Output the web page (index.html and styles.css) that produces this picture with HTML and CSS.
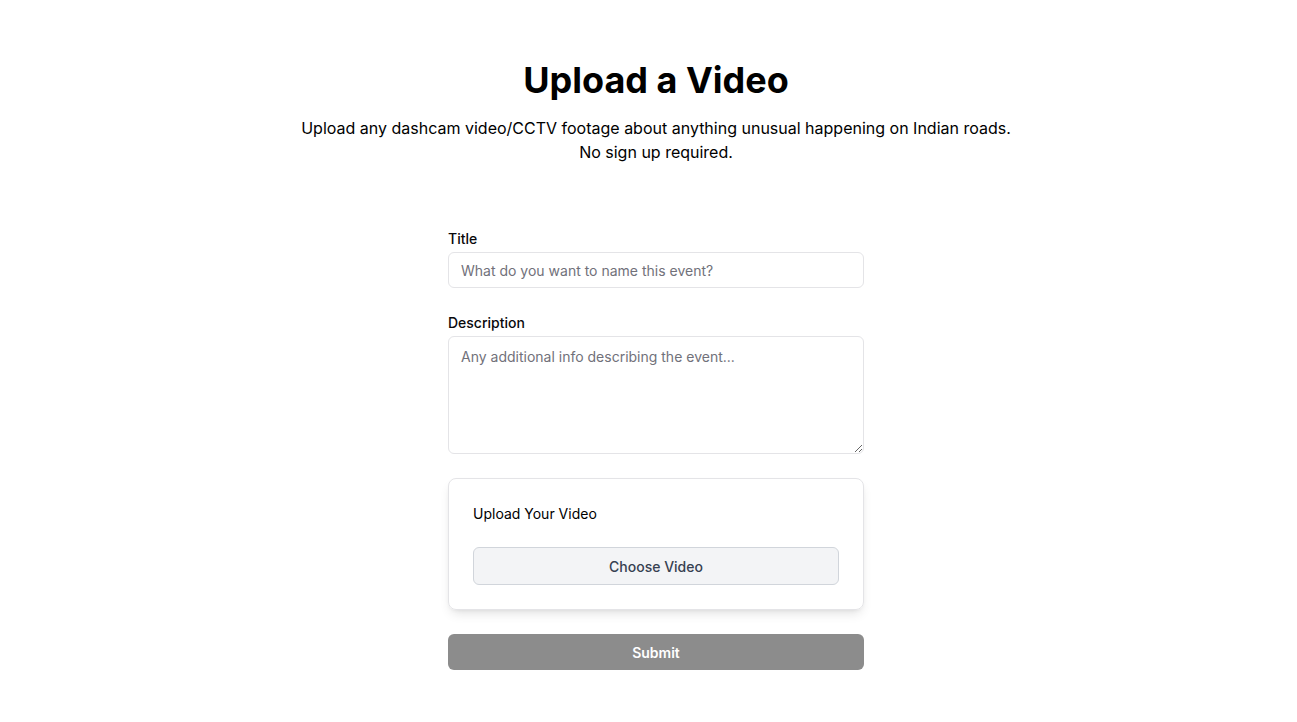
FILE: index.html
```html
<!DOCTYPE html>
<html lang="en">
<head>
<meta charset="utf-8">
<title>Upload a Video</title>
<link rel="stylesheet" href="styles.css">
</head>
<body>
<main class="page">
  <header class="intro">
    <h1 class="heading">Upload a Video</h1>
    <p class="lead">Upload any dashcam video/CCTV footage about anything unusual happening on Indian roads.<br>No sign up required.</p>
  </header>
  <form class="form">
    <div class="field">
      <label class="label" for="title">Title</label>
      <input class="input" id="title" type="text" placeholder="What do you want to name this event?">
    </div>
    <div class="field">
      <label class="label" for="desc">Description</label>
      <textarea class="textarea" id="desc" placeholder="Any additional info describing the event..."></textarea>
    </div>
    <div class="card">
      <div class="card-label">Upload Your Video</div>
      <button type="button" class="choose">Choose Video</button>
    </div>
    <button type="button" class="submit">Submit</button>
  </form>
</main>
</body>
</html>
```

FILE: styles.css
```css
* { box-sizing: border-box; }
html, body { margin: 0; padding: 0; background: #fff; }
body {
  font-family: Inter, "Noto Sans", "Liberation Sans", sans-serif;
  color: #000;
}
.page {
  display: flex;
  flex-direction: column;
  align-items: center;
  padding-top: 60px;
  padding-left: 15px;
}
.intro { text-align: center; }
.heading {
  margin: 0;
  font-size: 36px;
  line-height: 40px;
  font-weight: 700;
  color: #000;
}
.lead {
  margin: 16px 0 0;
  font-size: 16px;
  line-height: 24px;
  color: #000;
}
.form {
  width: 416px;
  margin-top: 64px;
  display: flex;
  flex-direction: column;
  gap: 24px;
}
.field { display: flex; flex-direction: column; }
.label {
  font-size: 14px;
  line-height: 20px;
  font-weight: 500;
  color: #09090b;
  padding-top: 1px;
  margin-bottom: 3px;
}
.input, .textarea {
  width: 100%;
  border: 1px solid #e4e4e7;
  border-radius: 6px;
  font-family: inherit;
  font-size: 14px;
  color: #09090b;
  background: #fff;
  padding: 0 12px;
  outline: none;
}
.input { height: 36px; }
.textarea {
  height: 118px;
  padding: 10px 12px 8px;
  line-height: 20px;
  resize: vertical;
  display: block;
}
.input::placeholder, .textarea::placeholder { color: #71717a; }
.card {
  border: 1px solid #e4e4e7;
  border-radius: 8px;
  padding: 25px 24px 24px;
  box-shadow: 0 6px 12px -3px rgba(0,0,0,0.12), 0 2px 4px -2px rgba(0,0,0,0.08);
  display: flex;
  flex-direction: column;
  gap: 23px;
}
.card-label {
  font-size: 14px;
  line-height: 20px;
  color: #000;
}
.choose {
  height: 38px;
  width: 100%;
  background: #f3f4f6;
  border: 1px solid #d1d5db;
  border-radius: 6px;
  font-family: inherit;
  font-size: 14px;
  font-weight: 500;
  color: #374151;
}
.submit {
  height: 36px;
  width: 100%;
  background: #8c8c8c;
  border: none;
  border-radius: 6px;
  font-family: inherit;
  font-size: 14px;
  font-weight: 600;
  color: #fff;
}
```
